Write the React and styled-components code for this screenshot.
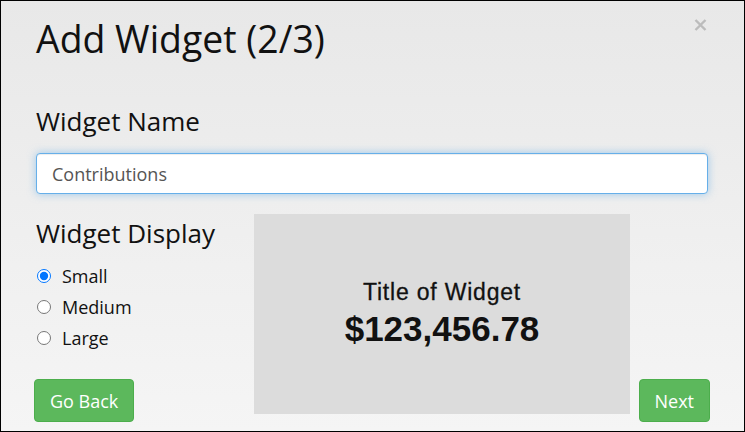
import React, { useEffect, useRef, useState } from 'react';
import styled, { createGlobalStyle } from 'styled-components';

const GlobalStyle = createGlobalStyle`
  html, body {
    margin: 0;
    padding: 0;
  }
  body {
    font-family: "Open Sans", "Liberation Sans", sans-serif;
    color: #111;
  }
`;

const Modal = styled.div`
  box-sizing: border-box;
  width: 745px;
  height: 432px;
  border: 1px solid #000;
  background: linear-gradient(#e8e8e8, #f5f5f5);
  padding: 18px 36px 0 35px;
  display: flex;
  flex-direction: column;
`;

const Header = styled.div`
  display: flex;
  justify-content: space-between;
  align-items: flex-start;
`;

const Title = styled.h1`
  margin: 0;
  font-size: 37.4px;
  line-height: 40px;
  font-weight: 400;
  color: #111;
`;

const CloseButton = styled.button`
  border: 0;
  background: none;
  padding: 0;
  margin: 0 1px 0 0;
  width: 13px;
  height: 12px;
  cursor: pointer;
  display: flex;
`;

const SectionLabel = styled.h2`
  margin: ${(p) => p.$top || 0}px 0 0;
  font-size: 26px;
  line-height: 30px;
  font-weight: 400;
  color: #111;
`;

const TextInput = styled.input`
  box-sizing: border-box;
  margin-top: 17px;
  width: 100%;
  height: 41px;
  padding: 0 15px;
  border: 1px solid #66afe9;
  border-radius: 4px;
  background: #fff;
  font-family: "Open Sans", "Liberation Sans", sans-serif;
  font-size: 18px;
  color: #555;
  caret-color: #111;
  outline: none;
  box-shadow: inset 0 1px 1px rgba(0, 0, 0, 0.075), 0 0 8px rgba(102, 175, 233, 0.6);
`;

const DisplayRow = styled.div`
  display: flex;
  margin-top: 20px;
`;

const OptionsColumn = styled.div`
  width: 218px;
  padding-top: 4px;
  display: flex;
  flex-direction: column;
  align-items: flex-start;
`;

const RadioList = styled.div`
  margin-top: 12px;
  display: flex;
  flex-direction: column;
`;

const RadioRow = styled.label`
  display: flex;
  align-items: center;
  height: 31px;
  font-size: 18px;
  color: #111;
  cursor: pointer;
`;

const Radio = styled.input`
  width: 14px;
  height: 14px;
  margin: 0 11px 0 1px;
  accent-color: #0075ff;
`;

const Preview = styled.div`
  align-self: flex-start;
  width: 376px;
  height: 200px;
  margin-bottom: 8px;
  background: #dcdcdc;
  display: flex;
  flex-direction: column;
  align-items: center;
  justify-content: center;
  font-family: "Liberation Sans", Arial, sans-serif;
  color: #111;
`;

const PreviewTitle = styled.div`
  font-size: 23px;
  line-height: 26px;
  letter-spacing: 0.8px;
  -webkit-text-stroke: 0.3px #111;
`;

const PreviewAmount = styled.div`
  margin-top: 4px;
  font-size: 35px;
  line-height: 40px;
  font-weight: 700;
`;

const NextColumn = styled.div`
  flex: 1;
  display: flex;
  justify-content: flex-end;
  align-items: flex-end;
  margin-right: -2px;
`;

const Button = styled.button`
  box-sizing: border-box;
  height: 43px;
  padding: 0 15px;
  margin-left: ${(p) => p.$shift || 0}px;
  margin-top: ${(p) => (p.$pushDown ? 'auto' : 0)};
  border: 1px solid #4cae4c;
  border-radius: 4px;
  background: #5cb85c;
  color: #fff;
  font-family: "Open Sans", "Liberation Sans", sans-serif;
  font-size: 18px;
  cursor: pointer;
`;

const sizes = ['Small', 'Medium', 'Large'];

export default function App() {
  const [name, setName] = useState('Contributions');
  const [size, setSize] = useState('Small');
  const inputRef = useRef(null);

  useEffect(() => {
    const el = inputRef.current;
    if (el) {
      el.focus();
      el.setSelectionRange(el.value.length, el.value.length);
    }
  }, []);

  return (
    <>
      <GlobalStyle />
      <Modal>
        <Header>
          <Title>Add Widget (2/3)</Title>
          <CloseButton aria-label="Close">
            <svg width="13" height="12" viewBox="0 0 13 12">
              <path d="M1.5 1 L11.5 11 M11.5 1 L1.5 11" stroke="#bcbcbc" strokeWidth="2.4" />
            </svg>
          </CloseButton>
        </Header>

        <SectionLabel $top={47}>Widget Name</SectionLabel>
        <TextInput ref={inputRef} value={name} onChange={(e) => setName(e.target.value)} />

        <DisplayRow>
          <OptionsColumn>
            <SectionLabel>Widget Display</SectionLabel>
            <RadioList>
              {sizes.map((s) => (
                <RadioRow key={s}>
                  <Radio
                    type="radio"
                    name="display"
                    checked={size === s}
                    onChange={() => setSize(s)}
                  />
                  {s}
                </RadioRow>
              ))}
            </RadioList>
            <Button $pushDown $shift={-2}>Go Back</Button>
          </OptionsColumn>

          <Preview>
            <PreviewTitle>Title of Widget</PreviewTitle>
            <PreviewAmount>$123,456.78</PreviewAmount>
          </Preview>

          <NextColumn>
            <Button>Next</Button>
          </NextColumn>
        </DisplayRow>
      </Modal>
    </>
  );
}
